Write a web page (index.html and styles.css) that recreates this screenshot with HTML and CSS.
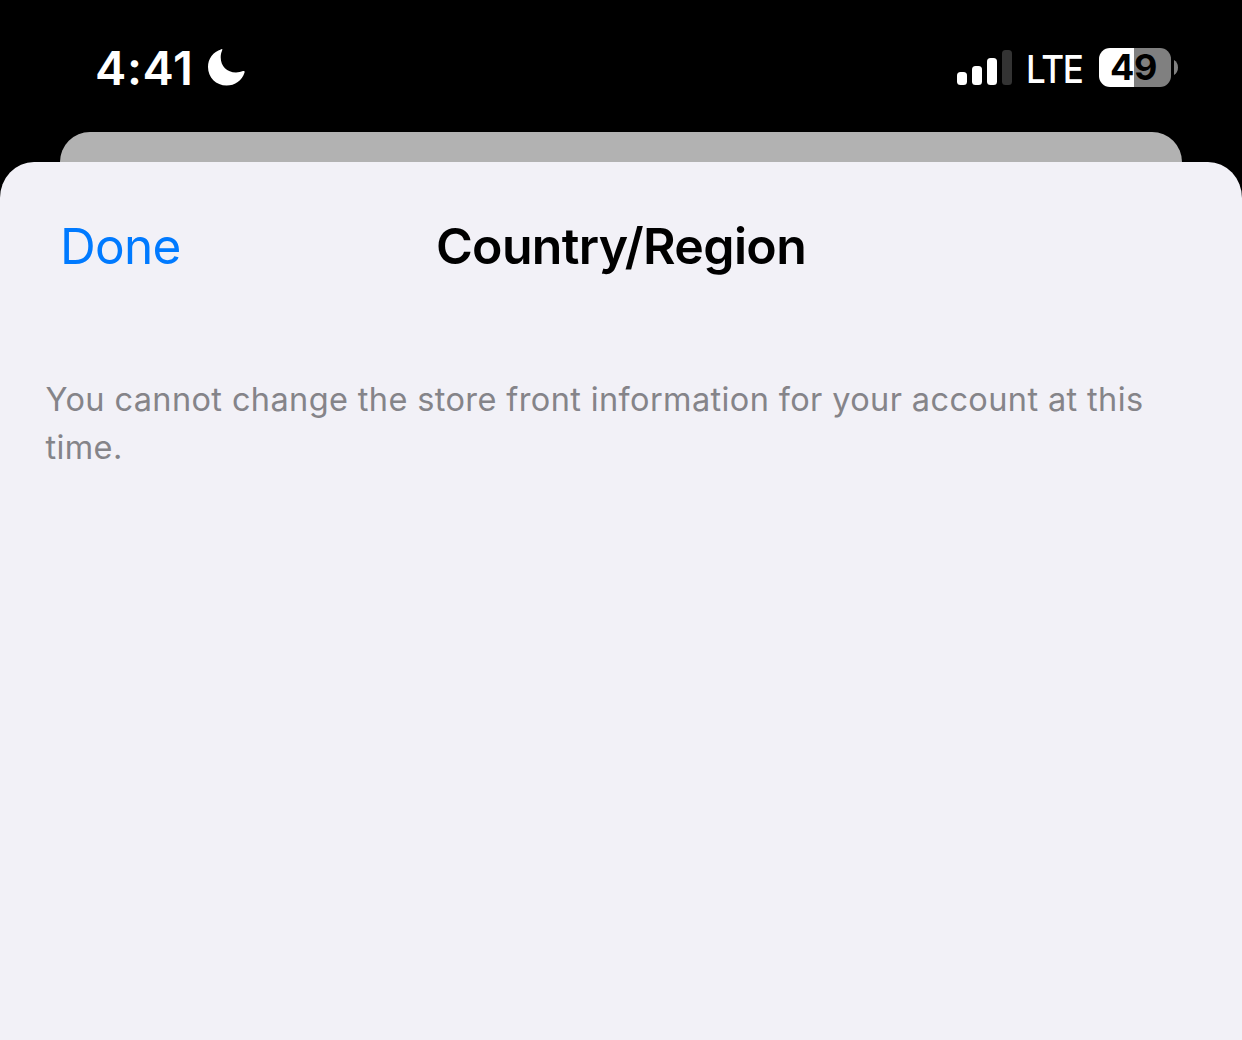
FILE: index.html
```
<!DOCTYPE html>
<html lang="en">
<head>
    <meta charset="UTF-8">
    <meta name="viewport" content="width=device-width, initial-scale=1.0">
    <title>Country/Region</title>
    <link rel="stylesheet" href="styles.css">
</head>
<body>
    <div class="status-bar">
        <div class="status-left">
            <span class="time">4:41</span>
            <svg class="moon" width="38" height="38" viewBox="0 0 38 38">
                <path d="M14.4 1.2 C6 3.7 1 10.700 1 19 C1 29.500 9 37.500 19.600 37.500 C28 37.500 35 32.400 37.500 24.700 C38 23.200 37.200 22.600 36 23 C34 23.900 31.500 24.400 29 24.400 C20 24.400 13.700 18.200 13.700 9.200 C13.700 6.800 14.200 4.600 15 2.800 C15.600 1.500 15.400 0.900 14.400 1.2 Z" fill="#fff"/>
            </svg>
        </div>
        <div class="status-right">
            <div class="signal">
                <span class="bar bar-1"></span>
                <span class="bar bar-2"></span>
                <span class="bar bar-3"></span>
                <span class="bar bar-4"></span>
            </div>
            <span class="network">LTE</span>
            <div class="battery">49</div>
            <svg class="battery-cap" width="4" height="15" viewBox="0 0 4 15">
                <path d="M0 0 C2.500 1.500 4 4 4 7.500 C4 11 2.500 13.500 0 15 Z" fill="#808080"/>
            </svg>
        </div>
    </div>
    <div class="sheet-behind"></div>
    <div class="sheet">
        <nav class="top">
            <a class="done">Done</a>
            <h1 class="title">Country/Region</h1>
        </nav>
        <p class="message">You cannot change the store front information for your account at this time.</p>
    </div>
</body>
</html>
```

FILE: styles.css
```
*{
    font-family: Inter, "Liberation Sans", sans-serif;
    padding: 0;
    margin: 0;
    box-sizing: border-box;
}
body {
    display: flex;
    flex-direction: column;
    height: 100vh;
    overflow: hidden;
    background-color: #000;
}
.status-bar {
    display: flex;
    justify-content: space-between;
    height: 132px;
    padding: 38px 64px 34px 95px;
    color: white;
}
.status-left {
    display: flex;
    align-items: center;
    height: 60px;
}
.time {
    width: 112px;
    font-size: 47px;
    font-weight: 600;
    line-height: 60px;
    letter-spacing: 0.6px;
}
.moon {
    margin-top: -2px;
}
.status-right {
    display: flex;
    align-items: center;
    height: 59px;
}
.signal {
    display: flex;
    align-items: flex-end;
    gap: 5px;
    height: 35px;
}
.signal .bar {
    width: 10px;
    border-radius: 3.5px;
    background-color: white;
}
.signal .bar-1 {
    height: 13px;
}
.signal .bar-2 {
    height: 19px;
}
.signal .bar-3 {
    height: 27px;
}
.signal .bar-4 {
    height: 35px;
    background-color: #333;
}
.network {
    width: 87px;
    padding-left: 14px;
    padding-top: 3px;
    font-size: 38.5px;
    font-weight: 500;
    line-height: 57px;
    letter-spacing: -1.5px;
    transform: scaleX(0.91);
    transform-origin: 14px 50%;
}
.battery {
    width: 72px;
    height: 39px;
    margin-right: 3px;
    padding-right: 3px;
    border-radius: 11px;
    background: linear-gradient(to right, #fff 35px, #808080 35px);
    color: black;
    font-size: 36px;
    font-weight: 700;
    line-height: 39px;
    text-align: center;
    letter-spacing: -0.3px;
}
.sheet-behind {
    height: 30px;
    margin: 0 60px;
    border-radius: 30px 30px 0 0;
    background-color: #b2b2b2;
}
.sheet {
    flex: 1;
    border-radius: 34px 34px 0 0 / 36px 36px 0 0;
    background-color: #f2f1f7;
}
.top {
    display: grid;
    grid-template-columns: 1fr auto 1fr;
    align-items: center;
    height: 168px;
    padding: 0 60px;
    white-space: nowrap;
}
.done {
    color: #007aff;
    font-size: 49.5px;
    letter-spacing: -0.7px;
}
.title {
    font-size: 50px;
    font-weight: 600;
    letter-spacing: -0.65px;
}
.message {
    padding: 46px 60px 0 45.5px;
    color: #858489;
    font-size: 32.5px;
    line-height: 48px;
    letter-spacing: 0.38px;
}
```
